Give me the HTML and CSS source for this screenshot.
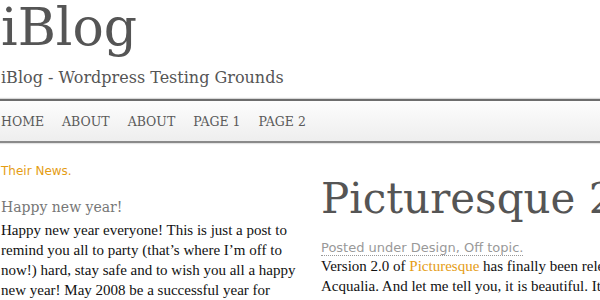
FILE: index.html
```html
<!DOCTYPE html>
<html lang="en">
<head>
	<meta charset="UTF-8">
	<title>iBlog - Wordpress Testing Grounds</title>
	<link rel="stylesheet" href="styles.css">
</head>
<body>
	<div class="header">
		<h1 class="logo">iBlog</h1>
		<p class="desc">iBlog - Wordpress Testing Grounds</p>
	</div>
	<div class="nav">
		<ul>
			<li><a href="#">HOME</a></li>
			<li><a href="#">ABOUT</a></li>
			<li><a href="#">ABOUT</a></li>
			<li><a href="#">PAGE 1</a></li>
			<li><a href="#">PAGE 2</a></li>
		</ul>
	</div>
	<div class="main">
		<div class="side">
			<h3 class="side-title">Their News.</h3>
			<h4 class="news-title">Happy new year!</h4>
			<p class="news-text">Happy new year everyone! This is just a post to remind you all to party (that’s where I’m off to now!) hard, stay safe and to wish you all a happy new year! May 2008 be a successful year for everyone, see you next year!</p>
		</div>
		<div class="post">
			<h2 class="post-title">Picturesque 2.0</h2>
			<p class="post-meta">Posted under Design, Off topic.</p>
			<p class="post-text">Version 2.0 of <a href="#">Picturesque</a> has finally been released by Acqualia. And let me tell you, it is beautiful. It has a fresh new interface and feel to it, more so than the last release, and a pile of new effects.</p>
		</div>
	</div>
</body>
</html>
```

FILE: styles.css
```css
* {
	padding: 0;
	margin: 0;
}
ul {
	list-style: none;
}
a {
	text-decoration: none;
}
html, body {
	overflow: hidden;
}
body {
	background: #fff;
	font-family: "DejaVu Serif", "Liberation Serif", serif;
	color: #111;
	width: 600px;
}
.header {
	padding: 3px 0 10px 1px;
}
.logo {
	font-size: 52px;
	font-weight: normal;
	line-height: 48px;
	color: #555;
}
.desc {
	margin-top: 16px;
	font-size: 16px;
	line-height: 22px;
	color: #555;
}
.nav {
	border-top: 2px solid #6d6d6d;
	border-bottom: 2px solid #8a8a8a;
	box-shadow: 0 -1px 1px #d8d8d8, 0 1px 1px #e4e4e4;
	background: linear-gradient(#fdfdfd, #eeeeee);
	padding: 2px 0 0 1px;
	box-sizing: border-box;
	height: 44px;
}
.nav ul {
	display: flex;
	gap: 18px;
}
.nav a {
	font-size: 12.5px;
	line-height: 38px;
	color: #5a5a5a;
}
.main {
	display: flex;
	padding: 20px 0 0 1px;
	width: 800px;
}
.side {
	width: 300px;
	flex-shrink: 0;
}
.side-title {
	font: normal 12px/16px "DejaVu Sans", Verdana, sans-serif;
	color: #e59d14;
}
.news-title {
	margin-top: 18px;
	font-size: 14px;
	font-weight: normal;
	line-height: 20px;
	color: #777;
}
.news-text, .post-text {
	font-family: "Liberation Serif", "DejaVu Serif", serif;
	font-size: 15px;
	line-height: 20px;
	color: #111;
}
.news-text {
	margin-top: 3px;
}
.post {
	margin-left: 20px;
	width: 340px;
	flex-shrink: 0;
}
.post-title {
	margin-top: 12px;
	font-size: 42px;
	font-weight: normal;
	line-height: 48px;
	color: #555;
	white-space: nowrap;
}
.post-meta {
	width: fit-content;
	margin-top: 17px;
	font: normal 13px/15px "DejaVu Sans", Verdana, sans-serif;
	color: #999;
	border-bottom: 1px dotted #999;
}
.post-text a {
	color: #e59d14;
}
```
